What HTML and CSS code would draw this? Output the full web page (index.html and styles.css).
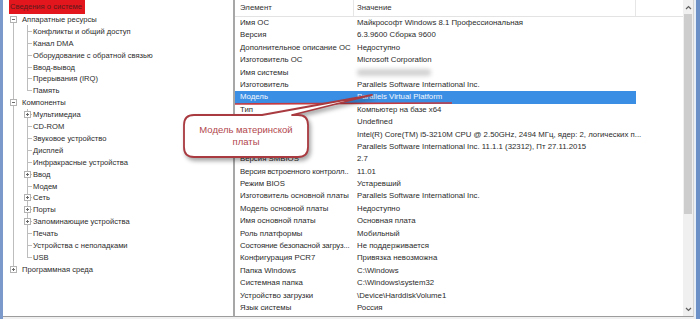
FILE: index.html
```html
<!DOCTYPE html>
<html lang="ru">
<head>
  <meta charset="UTF-8">
  <meta name="viewport" content="width=device-width, initial-scale=1.0">
  <title>Сведения о системе</title>
  <link rel="stylesheet" href="styles.css">
</head>
<body>
  <div class="window">
    <div class="edge-left"></div>

    <div class="tree-pane">
      <div class="node root"><span class="label selected">Сведения о системе</span></div>

      <div class="node"><span class="cell first"><span class="box minus"></span></span><span class="label">Аппаратные ресурсы</span></div>
      <div class="node l1"><span class="cell pipe"></span><span class="cell tee"></span><span class="label">Конфликты и общий доступ</span></div>
      <div class="node l1"><span class="cell pipe"></span><span class="cell tee"></span><span class="label">Канал DMA</span></div>
      <div class="node l1"><span class="cell pipe"></span><span class="cell tee"></span><span class="label">Оборудование с обратной связью</span></div>
      <div class="node l1"><span class="cell pipe"></span><span class="cell tee"></span><span class="label">Ввод-вывод</span></div>
      <div class="node l1"><span class="cell pipe"></span><span class="cell tee"></span><span class="label">Прерывания (IRQ)</span></div>
      <div class="node l1"><span class="cell pipe"></span><span class="cell end"></span><span class="label">Память</span></div>

      <div class="node"><span class="cell pipe"><span class="box minus"></span></span><span class="label">Компоненты</span></div>
      <div class="node l1"><span class="cell pipe"></span><span class="cell tee"><span class="box plus"></span></span><span class="label">Мультимедиа</span></div>
      <div class="node l1"><span class="cell pipe"></span><span class="cell tee"></span><span class="label">CD-ROM</span></div>
      <div class="node l1"><span class="cell pipe"></span><span class="cell tee"></span><span class="label">Звуковое устройство</span></div>
      <div class="node l1"><span class="cell pipe"></span><span class="cell tee"></span><span class="label">Дисплей</span></div>
      <div class="node l1"><span class="cell pipe"></span><span class="cell tee"></span><span class="label">Инфракрасные устройства</span></div>
      <div class="node l1"><span class="cell pipe"></span><span class="cell tee"><span class="box plus"></span></span><span class="label">Ввод</span></div>
      <div class="node l1"><span class="cell pipe"></span><span class="cell tee"></span><span class="label">Модем</span></div>
      <div class="node l1"><span class="cell pipe"></span><span class="cell tee"><span class="box plus"></span></span><span class="label">Сеть</span></div>
      <div class="node l1"><span class="cell pipe"></span><span class="cell tee"><span class="box plus"></span></span><span class="label">Порты</span></div>
      <div class="node l1"><span class="cell pipe"></span><span class="cell tee"><span class="box plus"></span></span><span class="label">Запоминающие устройства</span></div>
      <div class="node l1"><span class="cell pipe"></span><span class="cell tee"></span><span class="label">Печать</span></div>
      <div class="node l1"><span class="cell pipe"></span><span class="cell tee"></span><span class="label">Устройства с неполадками</span></div>
      <div class="node l1"><span class="cell pipe"></span><span class="cell end"></span><span class="label">USB</span></div>

      <div class="node"><span class="cell last"><span class="box plus"></span></span><span class="label">Программная среда</span></div>
    </div>

    <div class="list-pane">
      <div class="list">
        <div class="list-head">
          <span class="col-name">Элемент</span>
          <span class="col-value">Значение</span>
          <span class="col-rest"></span>
        </div>
        <div class="row"><span class="col-name">Имя ОС</span><span class="col-value">Майкрософт Windows 8.1 Профессиональная</span></div>
        <div class="row"><span class="col-name">Версия</span><span class="col-value">6.3.9600 Сборка 9600</span></div>
        <div class="row"><span class="col-name">Дополнительное описание ОС</span><span class="col-value">Недоступно</span></div>
        <div class="row"><span class="col-name">Изготовитель ОС</span><span class="col-value">Microsoft Corporation</span></div>
        <div class="row"><span class="col-name">Имя системы</span><span class="col-value"><span class="blurred"></span></span></div>
        <div class="row"><span class="col-name">Изготовитель</span><span class="col-value">Parallels Software International Inc.</span></div>
        <div class="row active"><span class="col-name">Модель</span><span class="col-value">Parallels Virtual Platform</span></div>
        <div class="row"><span class="col-name">Тип</span><span class="col-value">Компьютер на базе x64</span></div>
        <!-- labels of the next three rows are hidden under the callout -->
        <div class="row"><span class="col-name"></span><span class="col-value">Undefined</span></div>
        <div class="row"><span class="col-name"></span><span class="col-value">Intel(R) Core(TM) i5-3210M CPU @ 2.50GHz, 2494 МГц, ядер: 2, логических п...</span></div>
        <div class="row"><span class="col-name"></span><span class="col-value">Parallels Software International Inc. 11.1.1 (32312), Пт 27.11.2015</span></div>
        <div class="row"><span class="col-name">Версия SMBIOS</span><span class="col-value">2.7</span></div>
        <div class="row"><span class="col-name tight">Версия встроенного контролл..</span><span class="col-value">11.01</span></div>
        <div class="row"><span class="col-name">Режим BIOS</span><span class="col-value">Устаревший</span></div>
        <div class="row"><span class="col-name">Изготовитель основной платы</span><span class="col-value">Parallels Software International Inc.</span></div>
        <div class="row"><span class="col-name">Модель основной платы</span><span class="col-value">Недоступно</span></div>
        <div class="row"><span class="col-name">Имя основной платы</span><span class="col-value">Основная плата</span></div>
        <div class="row"><span class="col-name">Роль платформы</span><span class="col-value">Мобильный</span></div>
        <div class="row"><span class="col-name tight">Состояние безопасной загруз...</span><span class="col-value">Не поддерживается</span></div>
        <div class="row"><span class="col-name">Конфигурация PCR7</span><span class="col-value">Привязка невозможна</span></div>
        <div class="row"><span class="col-name">Папка Windows</span><span class="col-value">C:\Windows</span></div>
        <div class="row"><span class="col-name">Системная папка</span><span class="col-value">C:\Windows\system32</span></div>
        <div class="row"><span class="col-name">Устройство загрузки</span><span class="col-value">\Device\HarddiskVolume1</span></div>
        <div class="row"><span class="col-name">Язык системы</span><span class="col-value">Россия</span></div>
      </div>

      <div class="scrollbar">
        <span class="arrow">
          <svg width="7" height="5" viewBox="0 0 7 5"><path d="M1 4 L3.5 1.5 L6 4" fill="none" stroke="#606060" stroke-width="1.2"/></svg>
        </span>
        <span class="thumb"></span>
        <span class="track"></span>
        <span class="arrow">
          <svg width="7" height="5" viewBox="0 0 7 5"><path d="M1 1 L3.5 3.5 L6 1" fill="none" stroke="#606060" stroke-width="1.2"/></svg>
        </span>
      </div>
    </div>

    <div class="edge-right"></div>
  </div>

  <!-- annotation drawn over the screenshot -->
  <svg class="annotation" width="700" height="319" viewBox="0 0 700 319">
    <line x1="235" y1="104" x2="452" y2="103" stroke="#c43a40" stroke-width="1.6"/>
    <path class="bubble" d="M194 115 H262 L372 95 L292 115 H298 Q308 115 308 125 V147 Q308 157 298 157 H194 Q184 157 184 147 V125 Q184 115 194 115 Z"
          fill="#fff" stroke="#a83a40" stroke-width="1.8" stroke-linejoin="round"/>
  </svg>
  <div class="callout-text">Модель материнской<br>платы</div>
</body>
</html>
```

FILE: styles.css
```css
* {
  margin: 0;
  padding: 0;
  box-sizing: border-box;
}

body {
  width: 700px;
  height: 319px;
  overflow: hidden;
  background: #fff;
  font-family: 'Liberation Sans', Arial, sans-serif;
  font-size: 7.8px;
  color: #2b2b2b;
}

.window {
  display: flex;
  height: 319px;
  background: #f0f0f0;
}

.edge-left {
  width: 3px;
  background: #7b9acb;
}

/* tree on the left */

.tree-pane {
  width: 231px;
  height: 317px;
  background: #fff;
  border-right: 1px solid #a7a7a7;
  border-bottom: 1px solid #9c9c9c;
  padding-left: 6px;
  font-size: 7.6px;
}

.node {
  display: flex;
  align-items: center;
  height: 11.9px;
  white-space: nowrap;
}

.node.root {
  height: 13.6px;
}

.label {
  margin-left: 4px;
}

.l1 .label {
  margin-left: 1px;
}

.label.selected {
  margin-left: 0;
  background: #e3151d;
  color: #5a1c1c;
  height: 13.6px;
  line-height: 13px;
  padding: 0 2px 0 1px;
  width: 76px;
  overflow: hidden;
}

.cell {
  flex: none;
  width: 9px;
  height: 100%;
  display: flex;
  align-items: center;
  --ln: #bdbdbd;
}

.cell + .cell {
  margin-left: 5px;
}

.cell.pipe {
  background: linear-gradient(var(--ln), var(--ln)) 4px 0 / 1px 100% no-repeat;
}

.cell.tee {
  background:
    linear-gradient(var(--ln), var(--ln)) 4px 0 / 1px 100% no-repeat,
    linear-gradient(var(--ln), var(--ln)) 4px 50% / 5px 1px no-repeat;
}

.cell.end {
  background:
    linear-gradient(var(--ln), var(--ln)) 4px 0 / 1px 50% no-repeat,
    linear-gradient(var(--ln), var(--ln)) 4px 50% / 5px 1px no-repeat;
}

.cell.first {
  background: linear-gradient(var(--ln), var(--ln)) 4px 100% / 1px 50% no-repeat;
}

.cell.last {
  background: linear-gradient(var(--ln), var(--ln)) 4px 0 / 1px 50% no-repeat;
}

.box {
  display: block;
  width: 7px;
  height: 7px;
  margin-left: 1px;
  border: 1px solid #b3b3b3;
  background-color: #fff;
}

.box.minus {
  background-image: linear-gradient(#6a6a6a, #6a6a6a);
  background-position: center;
  background-size: 3px 1px;
  background-repeat: no-repeat;
}

.box.plus {
  background-image: linear-gradient(#6a6a6a, #6a6a6a), linear-gradient(#6a6a6a, #6a6a6a);
  background-position: center, center;
  background-size: 3px 1px, 1px 3px;
  background-repeat: no-repeat;
}

/* list on the right */

.list-pane {
  display: flex;
  width: 460px;
  height: 317px;
  background: #fff;
  border-left: 1px solid #a7a7a7;
  border-right: 1px solid #d4d4d4;
  border-bottom: 1px solid #9c9c9c;
}

.list {
  flex: 1;
  overflow: hidden;
}

.list-head {
  display: flex;
  height: 17px;
  line-height: 16px;
  border-bottom: 1px solid #e3e3e3;
  color: #333;
}

.list-head span {
  border-right: 1px solid #e6e6e6;
}

.row {
  display: flex;
  width: 401px;
  height: 12.4px;
  line-height: 12.4px;
  white-space: nowrap;
}

.col-name {
  flex: none;
  width: 119px;
  padding-left: 5px;
  overflow: hidden;
}

.col-name.tight {
  letter-spacing: -0.15px;
}

.col-value {
  flex: none;
  width: 282px;
  padding-left: 3px;
}

.col-rest {
  flex: 1;
  border-right: none !important;
}

.row.active {
  background: #3a8fe4;
  color: #f4f8ff;
}

.blurred {
  display: inline-block;
  width: 74px;
  height: 7px;
  vertical-align: middle;
  background: #d2d2d2;
  border-radius: 3px;
  filter: blur(2px);
}

.scrollbar {
  flex: none;
  width: 10px;
  display: flex;
  flex-direction: column;
  background: #f0f0f0;
}

.arrow {
  height: 14px;
  display: flex;
  align-items: center;
  justify-content: center;
}

.thumb {
  height: 200px;
  margin: 0 1px;
  background: #cdcdcd;
}

.track {
  flex: 1;
}

.edge-right {
  flex: 1;
  background: #6b8fc7;
  border-left: 2px solid #e8eef6;
}

/* annotation */

.annotation {
  position: absolute;
  left: 0;
  top: 0;
  pointer-events: none;
}

.annotation .bubble {
  filter: drop-shadow(2px 3px 2px rgba(0, 0, 0, 0.35));
}

.callout-text {
  position: absolute;
  left: 184px;
  top: 115px;
  width: 124px;
  height: 42px;
  display: flex;
  align-items: center;
  justify-content: center;
  text-align: center;
  font-size: 9.5px;
  line-height: 12px;
  color: #b2474d;
}
```
